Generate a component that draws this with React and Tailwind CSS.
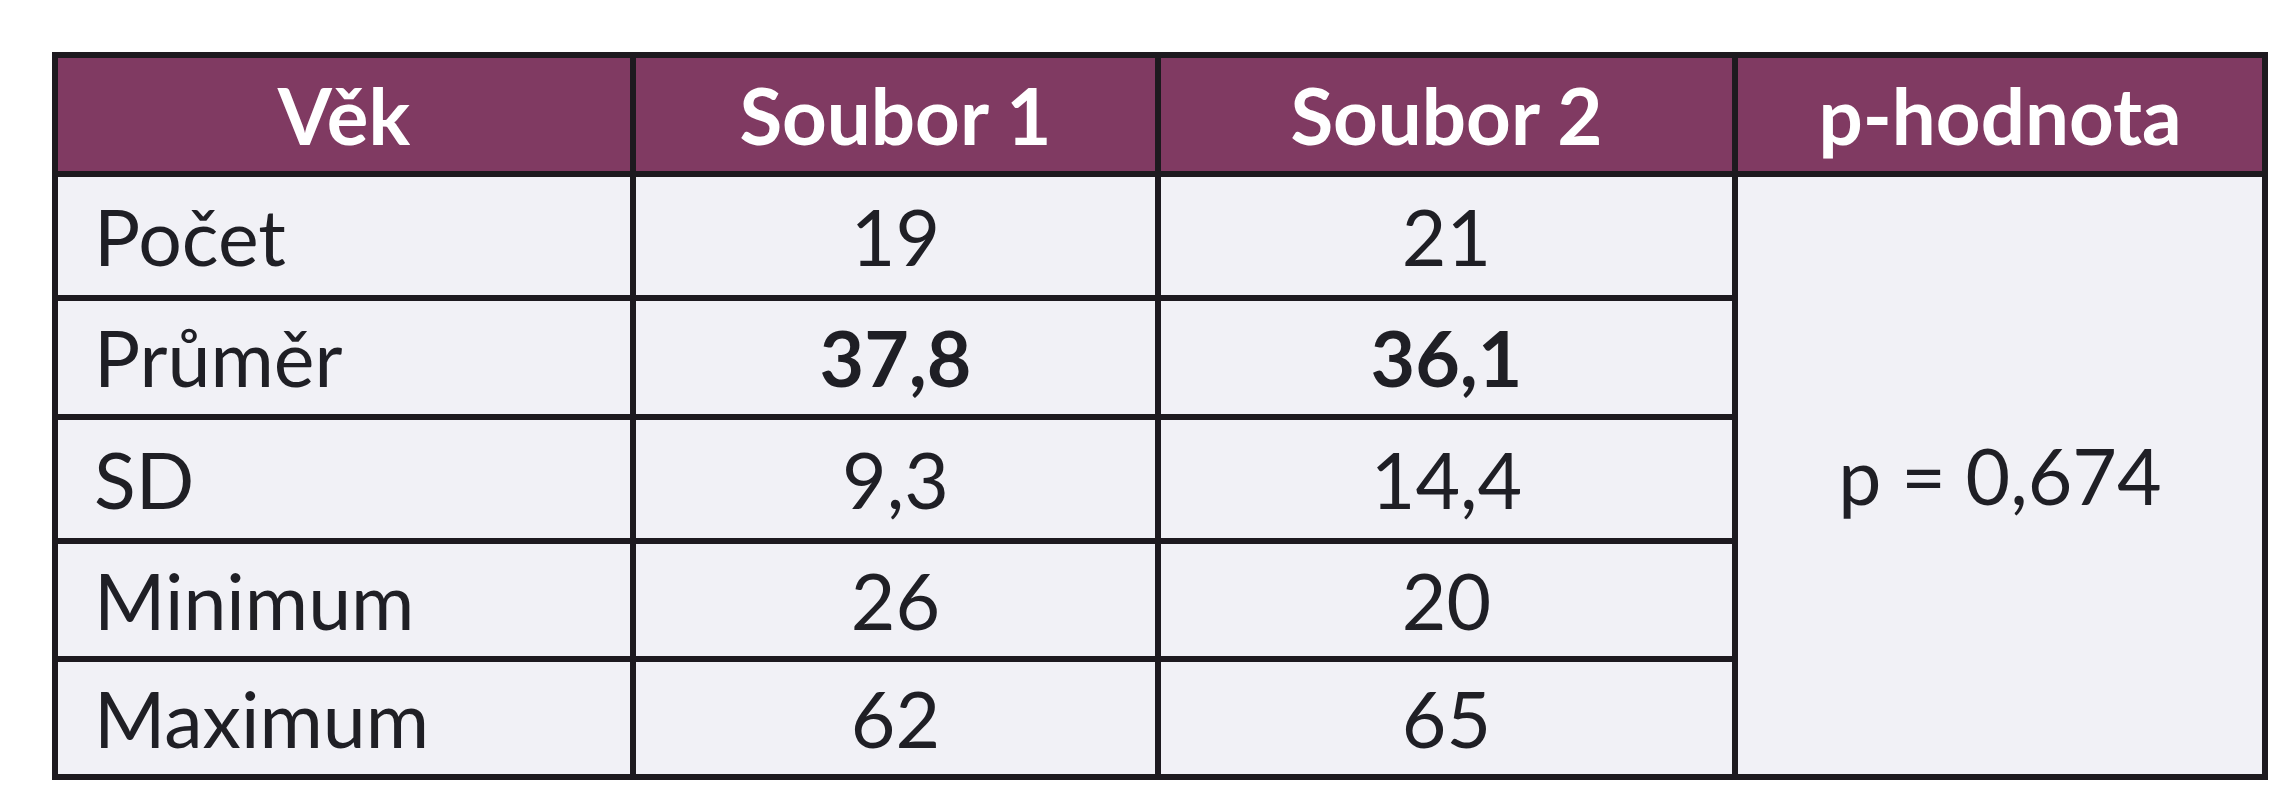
import React from "react";

const rows = [
  { label: "Počet", a: "19", b: "21", h: "h-[118px]" },
  { label: "Průměr", a: "37,8", b: "36,1", h: "h-[113px]", bold: true },
  { label: "SD", a: "9,3", b: "14,4", h: "h-[118px]" },
  { label: "Minimum", a: "26", b: "20", h: "h-[112px]" },
  { label: "Maximum", a: "62", b: "65", h: "h-[112px]" },
];

const headers = ["Věk", "Soubor 1", "Soubor 2", "p-hodnota"];

export default function App() {
  return (
    <div
      className="w-[2295px] h-[800px] bg-white pt-[52px] pl-[52px]"
      style={{ fontFamily: "Lato, 'Liberation Sans', sans-serif" }}
    >
      {/* grid lines come from the dark background showing through the gaps */}
      <div className="inline-grid grid-cols-[572px_519px_571px_524px] gap-[6px] p-[6px] bg-[#1d1a1f]">
        {headers.map((h) => (
          <div
            key={h}
            className="h-[113px] bg-[#803a62] flex items-center justify-center text-white font-bold text-[78px] leading-none"
          >
            {h}
          </div>
        ))}

        {rows.map((r, i) => (
          <React.Fragment key={r.label}>
            <div
              className={`${r.h} bg-[#f1f1f6] flex items-center pl-[36px] text-[#1f1f25] text-[77px] leading-none`}
            >
              {r.label}
            </div>
            <div
              className={`${r.h} bg-[#f1f1f6] flex items-center justify-center text-[#1f1f25] text-[77px] leading-none ${
                r.bold ? "font-bold" : ""
              }`}
            >
              {r.a}
            </div>
            <div
              className={`${r.h} bg-[#f1f1f6] flex items-center justify-center text-[#1f1f25] text-[77px] leading-none ${
                r.bold ? "font-bold" : ""
              }`}
            >
              {r.b}
            </div>
            {i === 0 && (
              <div className="row-span-5 bg-[#f1f1f6] flex items-center justify-center text-[#1f1f25] text-[77px] leading-none">
                p = 0,674
              </div>
            )}
          </React.Fragment>
        ))}
      </div>
    </div>
  );
}
